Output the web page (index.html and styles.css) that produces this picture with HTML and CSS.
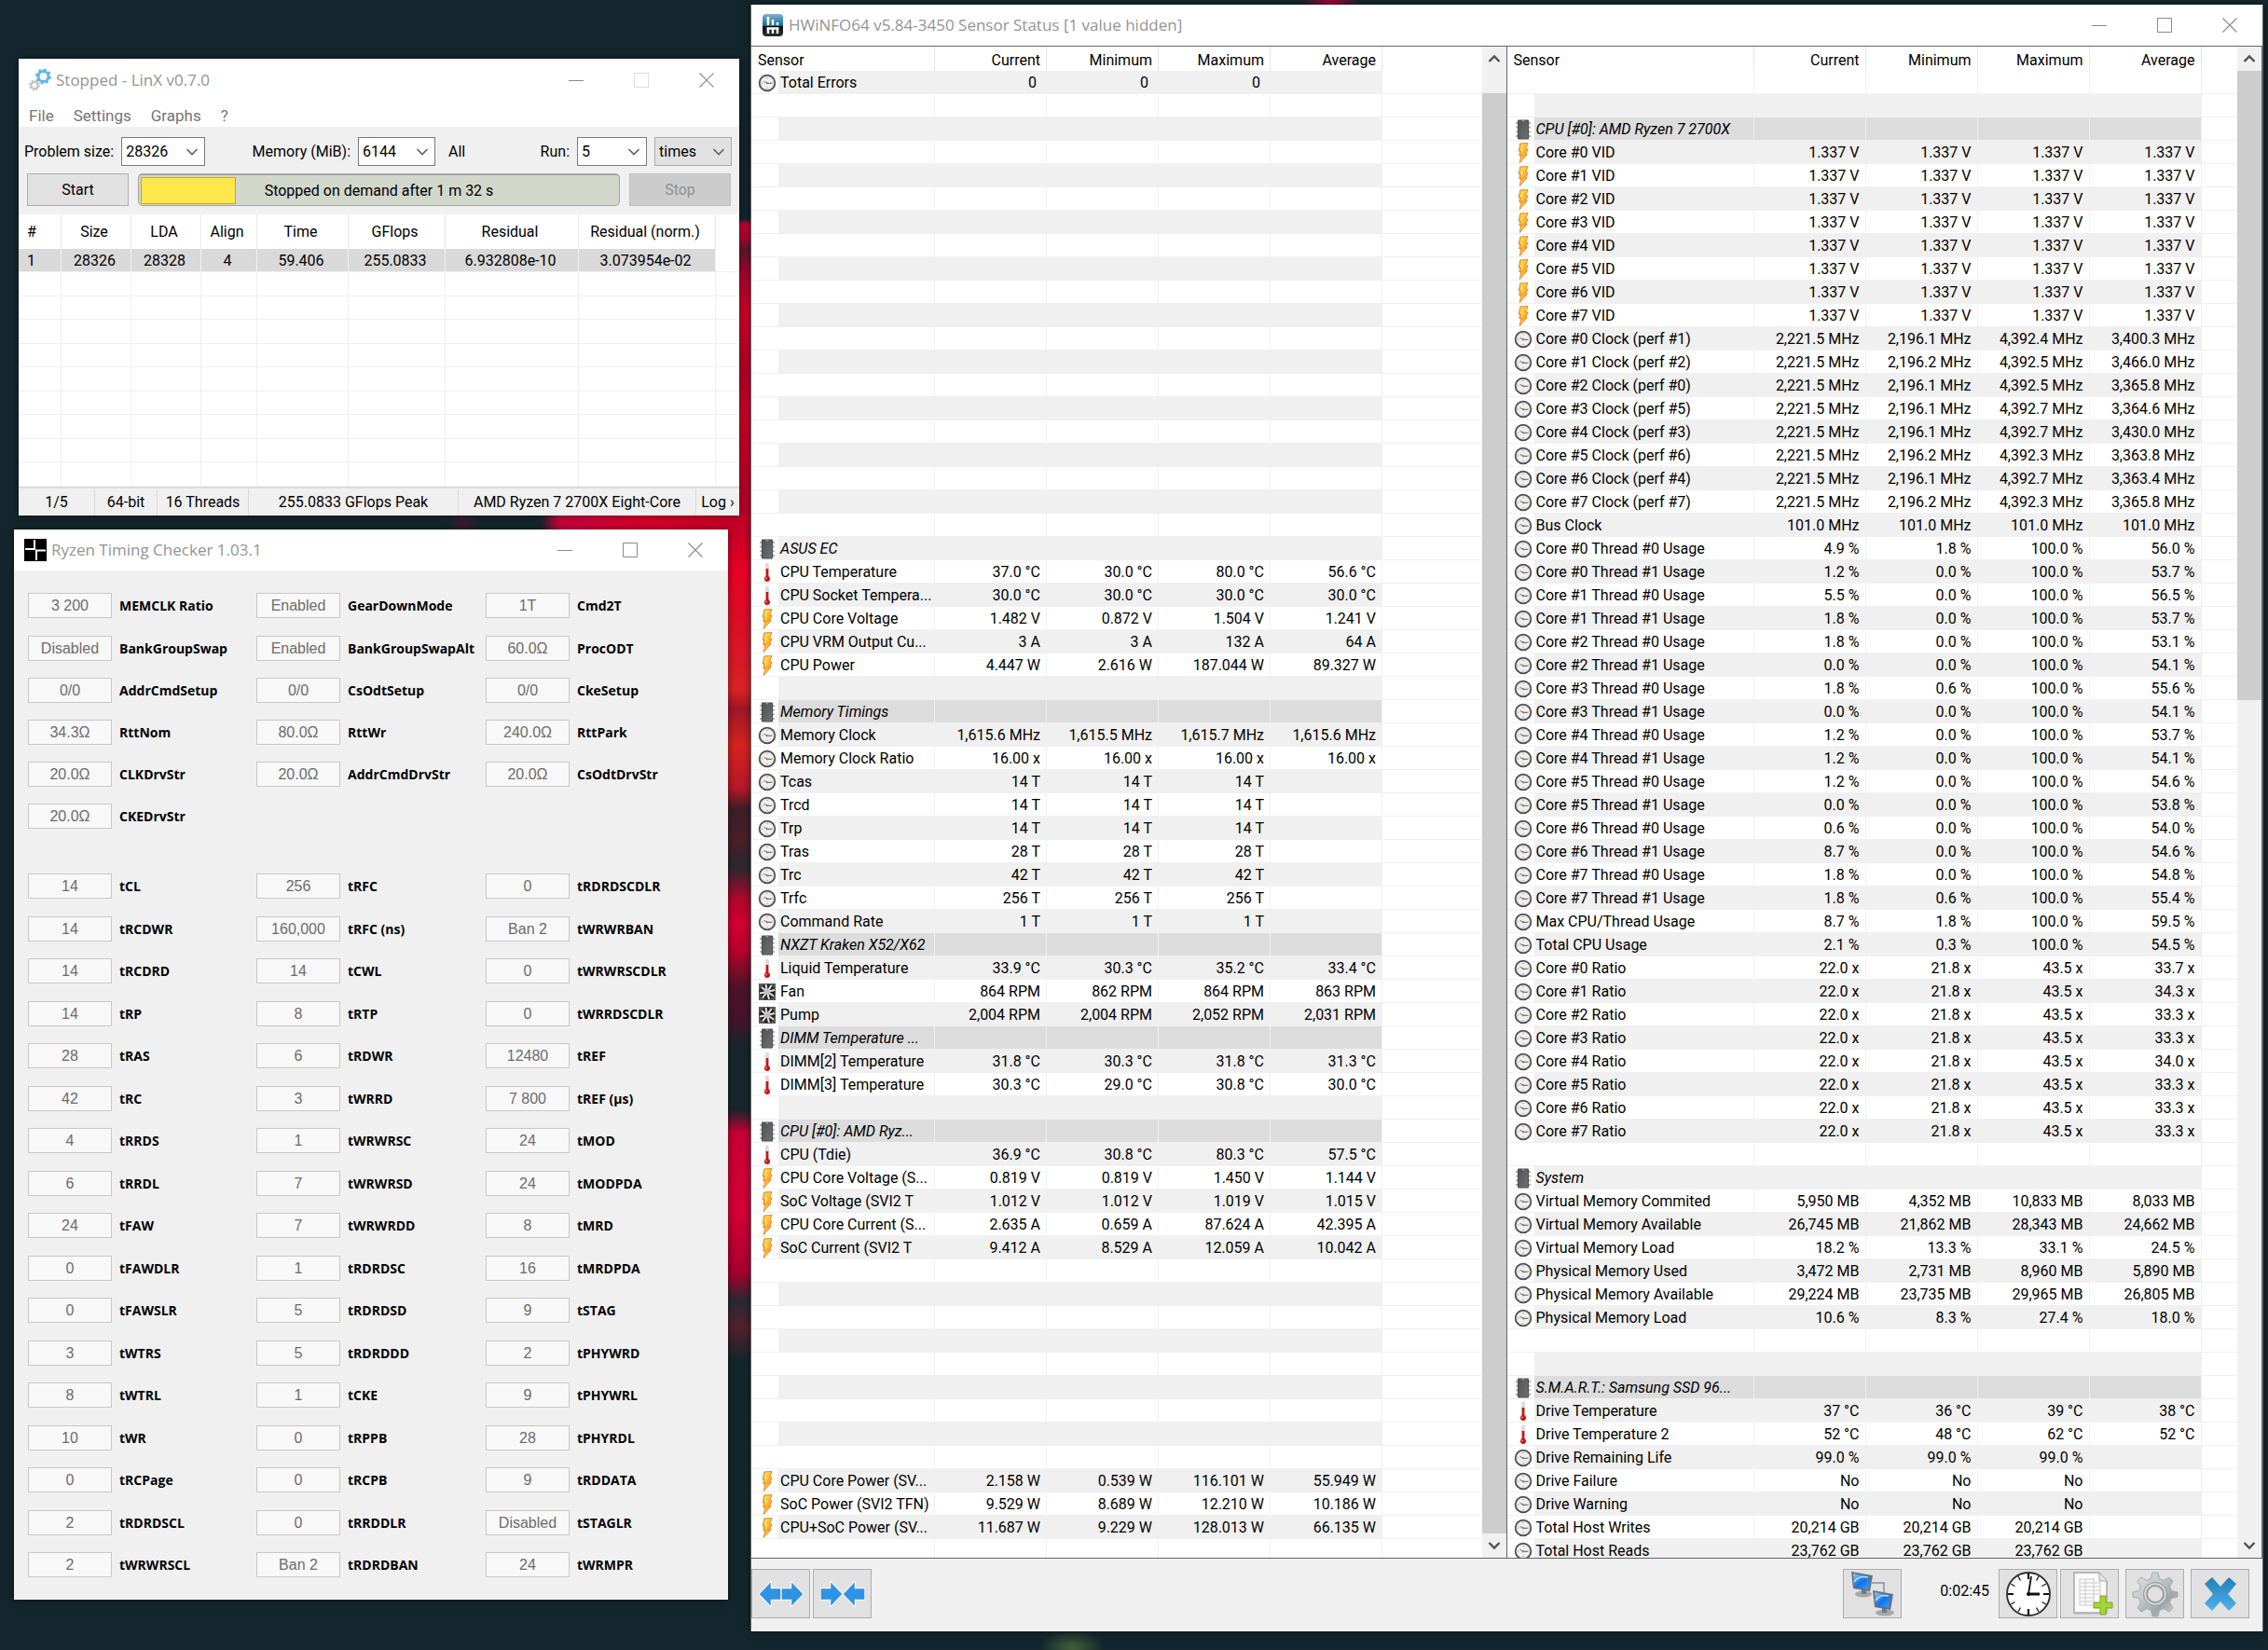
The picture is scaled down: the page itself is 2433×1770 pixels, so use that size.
FILE: index.html
```html
<!DOCTYPE html>
<html lang="en">
<head>
<meta charset="utf-8">
<title>Desktop</title>
<link rel="stylesheet" href="styles.css">
</head>
<body>
<svg class="defs" aria-hidden="true">
  <defs>
    <linearGradient id="g-bolt" x1="0" y1="0" x2="0" y2="1"><stop offset="0" stop-color="#ffd23c"/><stop offset=".6" stop-color="#ffa91c"/><stop offset="1" stop-color="#ffe95a"/></linearGradient>
    <linearGradient id="g-chip" x1="0" y1="0" x2="1" y2="1"><stop offset="0" stop-color="#505356"/><stop offset="1" stop-color="#6e7275"/></linearGradient>
    <linearGradient id="g-screen" x1="0" y1="0" x2="1" y2="1"><stop offset="0" stop-color="#8fcaff"/><stop offset=".5" stop-color="#1173e6"/><stop offset="1" stop-color="#3fa2ff"/></linearGradient>
    <linearGradient id="g-steel" x1="0" y1="0" x2="1" y2="1"><stop offset="0" stop-color="#dfe3e4"/><stop offset=".4" stop-color="#c3c9cb"/><stop offset=".7" stop-color="#9fa7a9"/><stop offset="1" stop-color="#d9dedf"/></linearGradient>
    <linearGradient id="g-cross" x1="0" y1="0" x2="0" y2="1"><stop offset="0" stop-color="#2380b8"/><stop offset="1" stop-color="#4fb2ea"/></linearGradient>
    <linearGradient id="g-app" x1="0" y1="0" x2="0" y2="1"><stop offset="0" stop-color="#7db4d0"/><stop offset=".55" stop-color="#14638f"/><stop offset=".56" stop-color="#0c0f12"/><stop offset="1" stop-color="#2b2f33"/></linearGradient>
  </defs>
  <symbol id="clock" viewBox="0 0 20 20"><circle cx="10" cy="10" r="8.300" fill="#efefef" stroke="#4d4d4d" stroke-width="1.900"/><circle cx="10" cy="10" r="7" fill="none" stroke="#d0d0d0" stroke-width=".8"/><path d="M10 4v1.200M10 14.800V16M4.200 10h1.200M14.600 10h1.200" stroke="#999" stroke-width="1"/><path d="M10 10.200 6.500 8.300" stroke="#666" stroke-width="1"/><path d="M9.500 10.300h5.200" stroke="#555" stroke-width="1"/><circle cx="10" cy="10.300" r="1.100" fill="#b07050"/></symbol>
  <symbol id="chip" viewBox="0 0 20 22"><path d="M2 4h16M2 8.700h16M2 13.300h16M2 18h16" stroke="#a9acae" stroke-width="1.800" stroke-dasharray="1.500 0"/><path d="M4.500 1h11v20h-11z" fill="url(#g-chip)" stroke="#4a4d4f"/><path d="M8.500 1a1.500 1.500 0 0 0 3 0" fill="#999"/></symbol>
  <symbol id="temp" viewBox="0 0 20 22"><path d="M10 2.500v13" stroke="#dcdcdc" stroke-width="4" stroke-linecap="round"/><path d="M10 7v9" stroke="#cc1414" stroke-width="2.600"/><circle cx="10" cy="18" r="3" fill="#cf1010"/><circle cx="9" cy="17.400" r=".9" fill="#f39a9a"/></symbol>
  <symbol id="bolt" viewBox="0 0 20 24"><path d="M6.500 1 15.500.6 12.800 7.500l2.800.2-2.700 5.600 1.800.2L6 23.500l1.500-8.800-2.200.3 1.400-5.200-1.900.1z" fill="url(#g-bolt)" stroke="#d8803a" stroke-width="1"/><path d="M9 2.500 7.500 8.500l2-.3-1.500 5" fill="none" stroke="#fff0a0" stroke-width="1"/></symbol>
  <symbol id="fan" viewBox="0 0 20 20"><path d="M1 1h18v18H1z" fill="#5a5a5a"/><circle cx="10" cy="10" r="8.600" fill="#262626"/><path d="M10 10 8.500 2M10 10l4.500-7M10 10l8-2M10 10l7 4.500M10 10l2 8M10 10l-5 6.500M10 10l-8 1.500M10 10 4 5" stroke="#e4e4e4" stroke-width="2"/><circle cx="10" cy="10" r="2.800" fill="#c9b9b9"/></symbol>
  <symbol id="minimize" viewBox="0 0 16 16"><path d="M0 8.500h16" stroke="currentColor"/></symbol>
  <symbol id="maximize" viewBox="0 0 16 16"><path d="M.5.5h15v15H.5z" fill="none" stroke="currentColor"/></symbol>
  <symbol id="close" viewBox="0 0 16 16"><path d="M.5.5l15 15M15.500.5l-15 15" stroke="currentColor" stroke-width="1.100"/></symbol>
  <symbol id="up" viewBox="0 0 14 10"><path d="M1.500 8 7 2.500 12.500 8" fill="none" stroke="#505050" stroke-width="2.400"/></symbol>
  <symbol id="down" viewBox="0 0 14 10"><path d="M1.500 2 7 7.500 12.500 2" fill="none" stroke="#505050" stroke-width="2.400"/></symbol>
  <symbol id="arrow" viewBox="0 0 24 28"><path d="M1 8.500h10.500V2L23 14 11.500 26v-6.500H1z" fill="#2d93e6" stroke="#f7fbff" stroke-width="2.500"/><path d="M1 8.500h10.500V2L23 14 11.500 26v-6.500H1z" fill="#2d93e6" stroke="#5f8fb5" stroke-width=".6"/></symbol>
</svg>

<main class="desktop">

  <section class="window linx" aria-label="LinX">
    <header class="titlebar">
      <svg class="app-icon" viewBox="0 0 24 24"><circle cx="15.500" cy="8" r="5.500" fill="none" stroke="#5db9e6" stroke-width="3"/><circle cx="15.500" cy="8" r="7.500" fill="none" stroke="#5db9e6" stroke-width="2" stroke-dasharray="2.900 3"/><circle cx="6" cy="17.500" r="3.600" fill="none" stroke="#c2c2c2" stroke-width="2.200"/><circle cx="6" cy="17.500" r="5.200" fill="none" stroke="#c2c2c2" stroke-width="1.600" stroke-dasharray="2 2.080"/></svg>
      <h1>Stopped - LinX v0.7.0</h1>
      <button class="win-btn" aria-label="Minimize"><svg><use href="#minimize"/></svg></button>
      <button class="win-btn" aria-label="Maximize" disabled><svg><use href="#maximize"/></svg></button>
      <button class="win-btn" aria-label="Close"><svg><use href="#close"/></svg></button>
    </header>
    <nav class="menu">
      <button>File</button><button>Settings</button><button>Graphs</button><button>?</button>
    </nav>
    <div class="controls">
      <div class="fields">
        <label for="size">Problem size:</label>
        <select id="size" class="combo w90"><option>28326</option></select>
        <label for="memory" class="push">Memory (MiB):</label>
        <select id="memory" class="combo w83"><option>6144</option></select>
        <button class="link-btn">All</button>
        <label for="runs" class="push">Run:</label>
        <select id="runs" class="combo w75"><option>5</option></select>
        <select class="combo gray w83" aria-label="Unit"><option>times</option></select>
      </div>
      <div class="actions">
        <button class="push-btn">Start</button>
        <div class="progress"><div class="progress-fill" style="width:20%"></div><span>Stopped on demand after 1 m 32 s</span></div>
        <button class="push-btn" disabled>Stop</button>
      </div>
    </div>
    <table class="results" id="results">
      <colgroup><col class="c46"><col class="c75"><col class="c75"><col class="c60"><col class="c98"><col class="c104"><col class="c143"><col class="c147"><col></colgroup>
      <thead><tr><th>#</th><th>Size</th><th>LDA</th><th>Align</th><th>Time</th><th>GFlops</th><th>Residual</th><th>Residual (norm.)</th><th></th></tr></thead>
      <tbody>
        <tr class="picked"><td>1</td><td>28326</td><td>28328</td><td>4</td><td>59.406</td><td>255.0833</td><td>6.932808e-10</td><td>3.073954e-02</td><td></td></tr>
      </tbody>
    </table>
    <footer class="status"><span class="s82">1/5</span><span class="s67">64-bit</span><span class="s98">16 Threads</span><span class="s225">255.0833 GFlops Peak</span><span class="s255">AMD Ryzen 7 2700X Eight-Core</span><button>Log ›</button></footer>
  </section>

  <section class="window rtc" aria-label="Ryzen Timing Checker">
    <header class="titlebar">
      <svg class="app-icon" viewBox="0 0 24 24"><path d="M0 0h24v24H0z" fill="#000"/><path d="M11 1v10H1M13 23v-10.500h10" fill="none" stroke="#fff" stroke-width="2"/></svg>
      <h1>Ryzen Timing Checker 1.03.1</h1>
      <button class="win-btn" aria-label="Minimize"><svg><use href="#minimize"/></svg></button>
      <button class="win-btn" aria-label="Maximize"><svg><use href="#maximize"/></svg></button>
      <button class="win-btn" aria-label="Close"><svg><use href="#close"/></svg></button>
    </header>
    <div class="timings">
      <div class="group" id="setup"></div>
      <div class="group" id="timing"></div>
    </div>
  </section>

  <section class="window hwinfo" aria-label="HWiNFO64">
    <header class="titlebar">
      <svg class="app-icon" viewBox="0 0 24 24"><rect x="1" y="0" width="22" height="24" rx="4" fill="url(#g-app)"/><path d="M7 3v9M12 6v6M17 9v3" stroke="#fff" stroke-width="2.500"/><path d="M7 16v5M12 16v5M17 16v5M5.500 15.500h13" stroke="#fff" stroke-width="2.500"/></svg>
      <h1>HWiNFO64 v5.84-3450 Sensor Status [1 value hidden]</h1>
      <button class="win-btn" aria-label="Minimize"><svg><use href="#minimize"/></svg></button>
      <button class="win-btn" aria-label="Maximize"><svg><use href="#maximize"/></svg></button>
      <button class="win-btn" aria-label="Close"><svg><use href="#close"/></svg></button>
    </header>
    <div class="panes">
      <div class="pane">
        <table class="sensors">
          <colgroup><col class="c-icon"><col class="c-name-a"><col class="c-val"><col class="c-val"><col class="c-val"><col class="c-val"><col></colgroup>
          <thead><tr><th colspan="2">Sensor</th><th>Current</th><th>Minimum</th><th>Maximum</th><th>Average</th><th></th></tr></thead>
          <tbody id="sensors-a" class="odd-shaded"></tbody>
        </table>
        <div class="scroll lower"><button aria-label="Scroll up"><svg><use href="#up"/></svg></button><div class="track"><div class="thumb" style="height:100%"></div></div><button aria-label="Scroll down"><svg><use href="#down"/></svg></button></div>
      </div>
      <div class="pane">
        <table class="sensors">
          <colgroup><col class="c-icon"><col class="c-name-b"><col class="c-val"><col class="c-val"><col class="c-val"><col class="c-val"><col></colgroup>
          <thead><tr><th colspan="2">Sensor</th><th>Current</th><th>Minimum</th><th>Maximum</th><th>Average</th><th></th></tr></thead>
          <tbody id="sensors-b" class="even-shaded"></tbody>
        </table>
        <div class="scroll"><button aria-label="Scroll up"><svg><use href="#up"/></svg></button><div class="track"><div class="thumb" style="height:43%"></div></div><button aria-label="Scroll down"><svg><use href="#down"/></svg></button></div>
      </div>
    </div>
    <footer class="toolbar">
      <button class="tool" aria-label="Expand columns"><svg class="arr flip"><use href="#arrow"/></svg><svg class="arr"><use href="#arrow"/></svg></button>
      <button class="tool" aria-label="Shrink columns"><svg class="arr"><use href="#arrow"/></svg><svg class="arr flip"><use href="#arrow"/></svg></button>
      <button class="tool remote" aria-label="Remote sensors"><svg class="big" viewBox="0 0 50 50"><path d="M24 13h13v11" fill="none" stroke="#8a8f93" stroke-width="1.500"/><ellipse cx="15" cy="25" rx="9" ry="3.500" fill="#a4a8ab"/><path d="M13 19h5v6h-5z" fill="#777"/><path d="M2 1 25 5 22 22 4 19z" fill="#6a7076"/><path d="M4 3 22.500 6.500 20 20 5.500 17.500z" fill="url(#g-screen)"/><path d="M5 12C8 7 13 5.500 20 7" fill="none" stroke="#bfe0ff" stroke-width="1.500"/><ellipse cx="38" cy="45" rx="10" ry="3.500" fill="#a4a8ab"/><path d="M35 39h5v6h-5z" fill="#777"/><path d="M25 21 47 25 44 42 27 39z" fill="#6a7076"/><path d="M27 23 44.500 26.500 42 40 28.500 37.500z" fill="url(#g-screen)"/><path d="M28 32c3-5 8-6.500 14-5" fill="none" stroke="#bfe0ff" stroke-width="1.500"/></svg></button>
      <time class="elapsed">0:02:45</time>
      <button class="tool" aria-label="Reset clock"><svg class="big" viewBox="0 0 50 50"><circle cx="25" cy="25" r="23" fill="#fff" stroke="#2d2d2d" stroke-width="1.800"/><path d="M25 3v6M25 41v6M3 25h6M41 25h6" stroke="#111" stroke-width="2.200"/><path d="M36 6l-2.500 4.500M44 14l-4.500 2.500M44 36l-4.500-2.500M36 44l-2.500-4.500M14 44l2.500-4.500M6 36l4.500-2.500M6 14l4.500 2.500M14 6l2.500 4.500" stroke="#222" stroke-width="1.400"/><path d="M25 25 28 6" stroke="#111" stroke-width="1.800"/><path d="M24 25h13" stroke="#111" stroke-width="3"/><circle cx="25" cy="25" r="2" fill="#111"/></svg></button>
      <button class="tool" aria-label="Start logging"><svg class="big" viewBox="0 0 50 50"><path d="M8 44h34v3H8z" fill="#ccc"/><path d="M8 2h27l8 9v34H8z" fill="#fafafa" stroke="#a8a8a8" stroke-width="1.500"/><path d="M35 2v9h8" fill="#e4e4e4" stroke="#a8a8a8"/><path d="M14 9h16M14 13h22M14 17h22M14 21h22M14 25h22M14 29h16M14 33h16M14 37h14M14 9v28M20 9v28M29 9v24M36 13v14" stroke="#ccc" fill="none"/><path d="M36 27h6v7h7v6h-7v7h-6v-7h-7v-6h7z" fill="#a5d631" stroke="#7da51f"/></svg></button>
      <button class="tool gap" aria-label="Settings"><svg class="big" viewBox="0 0 50 50"><path d="M22 2h6l1.500 6.500 4.500 2L40 7l4 4-3.500 6 2 4.500L49 23v5l-6.500 1.500-2 4.500L44 40l-4 4-6-3.500-4.500 2L28 49h-6l-1.500-6.500-4.500-2L10 44l-4-4 3.500-6-2-4.500L1 28v-5l6.500-1.500 2-4.500L6 11l4-4 6 3.500 4.500-2z" fill="url(#g-steel)" stroke="#a3aaac"/><circle cx="25" cy="25" r="12.500" fill="#d3d8d9" stroke="#8d9496"/><circle cx="25" cy="25" r="9" fill="#e1e1e1" stroke="#959c9e" stroke-width="2"/></svg></button>
      <button class="tool gap" aria-label="Close sensors"><svg class="big" viewBox="0 0 50 50"><path d="M16 7 25 17 34 7l8 7-9 11 9 10-8 8-9-10-9 10-8-8 9-10-9-11z" fill="url(#g-cross)"/></svg></button>
    </footer>
  </section>
</main>
<script src="app.js"></script>
</body>
</html>
```

FILE: styles.css
```css
* { box-sizing: border-box; }

html, body { height: 100%; margin: 0; }

body {
  font: 16px/24px Roboto, "Open Sans", sans-serif;
  color: #000;
}

button, input, select {
  font: inherit;
  color: inherit;
  margin: 0;
  padding: 0;
  border: 0;
  background: none;
}

.defs { position: absolute; width: 0; height: 0; }

.desktop {
  position: relative;
  min-height: 100vh;
  overflow: hidden;
  background-color: #14262d;
  background-image:
    linear-gradient(to bottom, transparent 235px, #c00435 240px, #b5052f 255px, #5a1a2a 268px, #a30830 290px, #d80028 330px, #b80028 400px, #d00028 440px, #c00028 520px, #c40028 565px, #e80024 610px, #d81828 700px, #d82424 740px, #a01828 760px, #d82420 800px, #b81828 845px, #3c2028 868px, #4a2028 900px, #2c2830 930px, #b0082c 965px, #d40030 990px, #b8042c 1020px, #4c1428 1060px, #46142a 1095px, #18262d 1120px, #18262d 1190px, #c80036 1215px, #d40034 1300px, #a80030 1365px, #2a2a32 1395px, #52222c 1425px, #14262d 1460px),
    linear-gradient(to right, transparent 480px, #3c1c2c 495px, #14262d 515px, #14262d 580px, #c80440 600px, #d80028 700px, #c40028 804px, transparent 805px),
    radial-gradient(ellipse at center, #41603a 0, rgba(65, 96, 58, 0) 70%),
    linear-gradient(to right, transparent, #a00838, transparent);
  background-position: 780px 0, 0 552px, 1115px 1748px, 1395px 0;
  background-size: 26px 100%, 805px 16px, 70px 40px, 65px 7px;
  background-repeat: no-repeat;
}

/* Windows */
.window {
  position: absolute;
  display: flex;
  flex-direction: column;
  background: #f0f0f0;
  box-shadow: 0 0 8px rgba(0, 0, 0, .5);
}

.linx { left: 20px; top: 63px; width: 773px; }
.rtc { left: 15px; top: 568px; width: 766px; }
.hwinfo { left: 805px; right: 5px; top: 5px; bottom: 20px; border: 1px solid #5a6468; border-width: 0 1px; }

.titlebar {
  display: flex;
  align-items: center;
  height: 44px;
  padding-left: 11px;
  background: #fff;
  color: #949494;
}

.titlebar h1 {
  flex: 1;
  margin: 0;
  padding-left: 5px;
  font: 400 17px/24px "Open Sans", sans-serif;
  white-space: nowrap;
}

.app-icon { width: 24px; height: 24px; }

.win-btn {
  display: grid;
  place-items: center;
  width: 70px;
  height: 40px;
  color: #8a8a8a;
}
.win-btn svg { width: 16px; height: 16px; }
.win-btn:disabled { color: #ddd; }

/* LinX */
.linx .titlebar { height: 45px; }

.menu {
  display: flex;
  gap: 21px;
  height: 28px;
  padding-left: 11px;
  background: #fff;
  color: #757575;
}
.menu button { height: 31px; font-size: 17px; }

.controls { height: 94px; padding: 11px 8px 0 6px; }

.fields { display: flex; align-items: center; height: 31px; }
.fields .push { margin-left: auto; }

.combo {
  appearance: none;
  height: 31px;
  margin-left: 8px;
  padding-left: 4px;
  border: 1px solid #7a7a7a;
  border-radius: 0;
  background: #fff url("data:image/svg+xml,%3Csvg xmlns='http://www.w3.org/2000/svg' width='14' height='10'%3E%3Cpath d='M1.500 2 7 7.500 12.500 2' fill='none' stroke='%23606060' stroke-width='1.600'/%3E%3C/svg%3E") no-repeat right 6px center;
}
.combo.gray { background-color: #e1e1e1; border-color: #adadad; }
.w90 { width: 90px; }
.w83 { width: 83px; }
.w75 { width: 75px; }

.link-btn { margin: 0 30px 0 14px; }

.actions { display: flex; gap: 10px; padding: 8px 1px 0 3px; }

.push-btn {
  width: 109px;
  height: 35px;
  border: 1px solid #adadad;
  background: #e1e1e1;
}
.push-btn:disabled { background: #ccc; border-color: #bfbfbf; color: #8f8f8f; }

.progress {
  display: grid;
  align-items: center;
  justify-items: center;
  flex: 1;
  height: 35px;
  padding: 2px;
  border: 1px solid #a3a69e;
  border-top-width: 2px;
  border-radius: 5px;
  background: #d2d7cc;
}
.progress > * { grid-area: 1 / 1; }
.progress-fill {
  justify-self: start;
  height: 29px;
  border: 1px solid #c7ab14;
  background: #fde74c;
}

table { table-layout: fixed; border-collapse: separate; border-spacing: 0; }
th, td { padding: 0; font-weight: 400; white-space: nowrap; overflow: hidden; }

.results { width: 100%; background: #fff; text-align: center; }
.results th { height: 37px; padding-right: 4px; border-right: 1px solid #e8e8e8; }
.results td { height: 25px; padding: 2px 3px 0 0; line-height: 22px; border-right: 1px solid #f0f0f0; border-bottom: 1px solid #f0f0f0; }
.results tr:nth-child(even) td { height: 26px; }
.results tr > :first-child { text-align: left; padding-left: 9px; }
.results tr > :last-child { border-right: 0; }
.results .picked td:not(:last-child) { background: #d9d9d9; }
.c46 { width: 46px; }
.c60 { width: 60px; }
.c75 { width: 75px; }
.c98 { width: 98px; }
.c104 { width: 104px; }
.c143 { width: 143px; }
.c147 { width: 147px; }

.status {
  display: flex;
  align-items: center;
  height: 31px;
  border-top: 2px solid #dcdcdc;
  text-align: center;
  white-space: nowrap;
}
.status span { border-right: 1px solid #d8d8d8; line-height: 28px; }
.status button { flex: 1; }
.s82 { width: 82px; }
.s67 { width: 67px; }
.s98 { width: 98px; }
.s225 { width: 225px; }
.s255 { width: 255px; }

/* Ryzen Timing Checker */
.timings { padding: 24px 15px 5px; }
.group + .group { margin-top: 30px; }

.trow {
  display: grid;
  grid-template-columns: 245px 246px 1fr;
  align-items: start;
  height: 45px;
}
#setup .trow:first-child,
#timing .trow:nth-child(odd) { height: 46px; }

.timing { display: flex; align-items: center; gap: 8px; }
.timing input {
  width: 90px;
  height: 27px;
  border: 1px solid #c8c8cc;
  background: #f8f8f8;
  color: #6d6d6d;
  font: 16px/24px "Liberation Sans", Arial, sans-serif;
  text-align: center;
}
.timing label { font: 700 14px/24px "Open Sans", sans-serif; white-space: nowrap; }

/* HWiNFO */
.hwinfo .titlebar { flex: none; height: 44px; }

.panes { flex: 1; min-height: 0; display: flex; }
.pane {
  flex: 1;
  min-width: 0;
  display: flex;
  align-items: flex-start;
  overflow: hidden;
  background: #fff;
  border: 1px solid #646464;
  border-left: 0;
}

.sensors { flex: 1; width: 0; }
.sensors th { height: 26px; padding: 4px 6px 0; line-height: 22px; text-align: right; border-right: 1px solid #e5e5e5; }
.sensors th:first-child { text-align: left; padding-left: 7px; }
.sensors th:last-child { border-right: 0; }
.sensors td {
  height: 25px;
  padding: 2px 6px 0;
  line-height: 22px;
  text-align: right;
  border-right: 1px solid #f0f0f0;
  border-bottom: 1px solid #f0f0f0;
}
.sensors td:nth-child(1) { padding: 1px 0 0 7px; text-align: left; border-right: 0; }
.sensors td:nth-child(2) { padding: 2px 0 0 2px; text-align: left; }
.sensors td:last-child { border-right: 0; }
.sensors td svg { display: block; width: 20px; height: 22px; }

.odd-shaded tr:nth-child(odd) td:not(:first-child):not(:last-child),
.even-shaded tr:nth-child(even) td:not(:first-child):not(:last-child) { background: #f0f0f0; }
.sensors .section td:not(:first-child):not(:last-child) { background: #dcdcdc; font-style: italic; }

.c-icon { width: 29px; }
.c-name-a { width: 168px; }
.c-name-b { width: 236px; }
.c-val { width: 120px; }

.scroll { align-self: stretch; display: flex; flex-direction: column; width: 26px; background: #f0f0f0; }
.scroll button { display: grid; place-items: center; height: 26px; }
.scroll svg { width: 14px; height: 10px; }
.track { flex: 1; }
.lower .track { padding-top: 24px; }
.thumb { background: #cdcdcd; }

.toolbar {
  display: flex;
  align-items: flex-start;
  gap: 3px;
  height: 78px;
  padding: 11px 14px 0 0;
}
.tool {
  display: flex;
  align-items: center;
  justify-content: center;
  width: 63px;
  height: 53px;
  border: 1px solid #adadad;
  background: #e1e1e1;
}
.tool.remote { margin-left: auto; }
.tool.gap { margin-left: 4px; }
.arr { width: 24px; height: 28px; }
.flip { transform: scaleX(-1); }
.big { width: 50px; height: 50px; }
.elapsed { width: 98px; padding-right: 7px; line-height: 48px; text-align: right; }
```

FILE: app.js
```js
const blank = n => Array(n).fill("");
const times = (n, f) => Array.from({ length: n }, (_, i) => f(i));

// icon|name|current|minimum|maximum|average; an empty string is a spacer row
const left = [
  "clock|Total Errors|0\u00a0|0\u00a0|0\u00a0|", ...blank(19),
  "chip|ASUS EC",
  "temp|CPU Temperature|37.0 °C|30.0 °C|80.0 °C|56.6 °C",
  "temp|CPU Socket Tempera...|30.0 °C|30.0 °C|30.0 °C|30.0 °C",
  "bolt|CPU Core Voltage|1.482 V|0.872 V|1.504 V|1.241 V",
  "bolt|CPU VRM Output Cu...|3 A|3 A|132 A|64 A",
  "bolt|CPU Power|4.447 W|2.616 W|187.044 W|89.327 W",
  "",
  "chip|Memory Timings",
  "clock|Memory Clock|1,615.6 MHz|1,615.5 MHz|1,615.7 MHz|1,615.6 MHz",
  "clock|Memory Clock Ratio|16.00 x|16.00 x|16.00 x|16.00 x",
  "clock|Tcas|14 T|14 T|14 T|",
  "clock|Trcd|14 T|14 T|14 T|",
  "clock|Trp|14 T|14 T|14 T|",
  "clock|Tras|28 T|28 T|28 T|",
  "clock|Trc|42 T|42 T|42 T|",
  "clock|Trfc|256 T|256 T|256 T|",
  "clock|Command Rate|1 T|1 T|1 T|",
  "chip|NXZT Kraken X52/X62",
  "temp|Liquid Temperature|33.9 °C|30.3 °C|35.2 °C|33.4 °C",
  "fan|Fan|864 RPM|862 RPM|864 RPM|863 RPM",
  "fan|Pump|2,004 RPM|2,004 RPM|2,052 RPM|2,031 RPM",
  "chip|DIMM Temperature ...",
  "temp|DIMM[2] Temperature|31.8 °C|30.3 °C|31.8 °C|31.3 °C",
  "temp|DIMM[3] Temperature|30.3 °C|29.0 °C|30.8 °C|30.0 °C",
  "",
  "chip|CPU [#0]: AMD Ryz...",
  "temp|CPU (Tdie)|36.9 °C|30.8 °C|80.3 °C|57.5 °C",
  "bolt|CPU Core Voltage (S...|0.819 V|0.819 V|1.450 V|1.144 V",
  "bolt|SoC Voltage (SVI2 T|1.012 V|1.012 V|1.019 V|1.015 V",
  "bolt|CPU Core Current (S...|2.635 A|0.659 A|87.624 A|42.395 A",
  "bolt|SoC Current (SVI2 T|9.412 A|8.529 A|12.059 A|10.042 A",
  ...blank(9),
  "bolt|CPU Core Power (SV...|2.158 W|0.539 W|116.101 W|55.949 W",
  "bolt|SoC Power (SVI2 TFN)|9.529 W|8.689 W|12.210 W|10.186 W",
  "bolt|CPU+SoC Power (SV...|11.687 W|9.229 W|128.013 W|66.135 W",
  ""
];

const clocks = [
  [1, "2,196.1", "4,392.4", "3,400.3"], [2, "2,196.2", "4,392.5", "3,466.0"],
  [0, "2,196.1", "4,392.5", "3,365.8"], [5, "2,196.1", "4,392.7", "3,364.6"],
  [3, "2,196.1", "4,392.7", "3,430.0"], [6, "2,196.2", "4,392.3", "3,363.8"],
  [4, "2,196.1", "4,392.7", "3,363.4"], [7, "2,196.2", "4,392.3", "3,365.8"]
];
const usage = [
  ["4.9", "1.8", "56.0"], ["1.2", "0.0", "53.7"], ["5.5", "0.0", "56.5"], ["1.8", "0.0", "53.7"],
  ["1.8", "0.0", "53.1"], ["0.0", "0.0", "54.1"], ["1.8", "0.6", "55.6"], ["0.0", "0.0", "54.1"],
  ["1.2", "0.0", "53.7"], ["1.2", "0.0", "54.1"], ["1.2", "0.0", "54.6"], ["0.0", "0.0", "53.8"],
  ["0.6", "0.0", "54.0"], ["8.7", "0.0", "54.6"], ["1.8", "0.0", "54.8"], ["1.8", "0.6", "55.4"]
];
const ratios = ["33.7", "34.3", "33.3", "33.3", "34.0", "33.3", "33.3", "33.3"];

const right = [
  "", "",
  "chip|CPU [#0]: AMD Ryzen 7 2700X",
  ...times(8, i => `bolt|Core #${i} VID|1.337 V|1.337 V|1.337 V|1.337 V`),
  ...clocks.map((c, i) => `clock|Core #${i} Clock (perf #${c[0]})|2,221.5 MHz|${c[1]} MHz|${c[2]} MHz|${c[3]} MHz`),
  "clock|Bus Clock|101.0 MHz|101.0 MHz|101.0 MHz|101.0 MHz",
  ...usage.map((u, i) => `clock|Core #${i >> 1} Thread #${i % 2} Usage|${u[0]} %|${u[1]} %|100.0 %|${u[2]} %`),
  "clock|Max CPU/Thread Usage|8.7 %|1.8 %|100.0 %|59.5 %",
  "clock|Total CPU Usage|2.1 %|0.3 %|100.0 %|54.5 %",
  ...ratios.map((r, i) => `clock|Core #${i} Ratio|22.0 x|21.8 x|43.5 x|${r} x`),
  "",
  "chip|System",
  "clock|Virtual Memory Commited|5,950 MB|4,352 MB|10,833 MB|8,033 MB",
  "clock|Virtual Memory Available|26,745 MB|21,862 MB|28,343 MB|24,662 MB",
  "clock|Virtual Memory Load|18.2 %|13.3 %|33.1 %|24.5 %",
  "clock|Physical Memory Used|3,472 MB|2,731 MB|8,960 MB|5,890 MB",
  "clock|Physical Memory Available|29,224 MB|23,735 MB|29,965 MB|26,805 MB",
  "clock|Physical Memory Load|10.6 %|8.3 %|27.4 %|18.0 %",
  "", "",
  "chip|S.M.A.R.T.: Samsung SSD 96...",
  "temp|Drive Temperature|37 °C|36 °C|39 °C|38 °C",
  "temp|Drive Temperature 2|52 °C|48 °C|62 °C|52 °C",
  "clock|Drive Remaining Life|99.0 %|99.0 %|99.0 %|",
  "clock|Drive Failure|No|No|No|",
  "clock|Drive Warning|No|No|No|",
  "clock|Total Host Writes|20,214 GB|20,214 GB|20,214 GB|",
  "clock|Total Host Reads|23,762 GB|23,762 GB|23,762 GB|"
];

function fillSensors(id, rows) {
  document.getElementById(id).innerHTML = rows.map(row => {
    const [icon, ...cells] = row.split("|");
    const svg = icon ? `<svg><use href="#${icon}"/></svg>` : "";
    const tds = times(6, i => `<td>${cells[i] || ""}</td>`).join("");
    return `<tr${icon === "chip" ? ' class="section"' : ""}><td>${svg}</td>${tds}</tr>`;
  }).join("");
}
fillSensors("sensors-a", left);
fillSensors("sensors-b", right);

const setup = [
  ["3 200", "MEMCLK Ratio", "Enabled", "GearDownMode", "1T", "Cmd2T"],
  ["Disabled", "BankGroupSwap", "Enabled", "BankGroupSwapAlt", "60.0Ω", "ProcODT"],
  ["0/0", "AddrCmdSetup", "0/0", "CsOdtSetup", "0/0", "CkeSetup"],
  ["34.3Ω", "RttNom", "80.0Ω", "RttWr", "240.0Ω", "RttPark"],
  ["20.0Ω", "CLKDrvStr", "20.0Ω", "AddrCmdDrvStr", "20.0Ω", "CsOdtDrvStr"],
  ["20.0Ω", "CKEDrvStr"]
];
const timing = [
  ["14", "tCL", "256", "tRFC", "0", "tRDRDSCDLR"],
  ["14", "tRCDWR", "160,000", "tRFC (ns)", "Ban 2", "tWRWRBAN"],
  ["14", "tRCDRD", "14", "tCWL", "0", "tWRWRSCDLR"],
  ["14", "tRP", "8", "tRTP", "0", "tWRRDSCDLR"],
  ["28", "tRAS", "6", "tRDWR", "12480", "tREF"],
  ["42", "tRC", "3", "tWRRD", "7 800", "tREF (µs)"],
  ["4", "tRRDS", "1", "tWRWRSC", "24", "tMOD"],
  ["6", "tRRDL", "7", "tWRWRSD", "24", "tMODPDA"],
  ["24", "tFAW", "7", "tWRWRDD", "8", "tMRD"],
  ["0", "tFAWDLR", "1", "tRDRDSC", "16", "tMRDPDA"],
  ["0", "tFAWSLR", "5", "tRDRDSD", "9", "tSTAG"],
  ["3", "tWTRS", "5", "tRDRDDD", "2", "tPHYWRD"],
  ["8", "tWTRL", "1", "tCKE", "9", "tPHYWRL"],
  ["10", "tWR", "0", "tRPPB", "28", "tPHYRDL"],
  ["0", "tRCPage", "0", "tRCPB", "9", "tRDDATA"],
  ["2", "tRDRDSCL", "0", "tRRDDLR", "Disabled", "tSTAGLR"],
  ["2", "tWRWRSCL", "Ban 2", "tRDRDBAN", "24", "tWRMPR"]
];

function fillTimings(id, rows) {
  document.getElementById(id).innerHTML = rows.map((r, y) => {
    const items = times(r.length / 2, i => {
      const key = `${id}-${y}-${i}`;
      return `<div class="timing"><input id="${key}" value="${r[i * 2]}" readonly><label for="${key}">${r[i * 2 + 1]}</label></div>`;
    });
    return `<div class="trow">${items.join("")}</div>`;
  }).join("");
}
fillTimings("setup", setup);
fillTimings("timing", timing);

document.querySelector("#results tbody").insertAdjacentHTML(
  "beforeend", times(9, () => `<tr>${"<td></td>".repeat(9)}</tr>`).join(""));
```
